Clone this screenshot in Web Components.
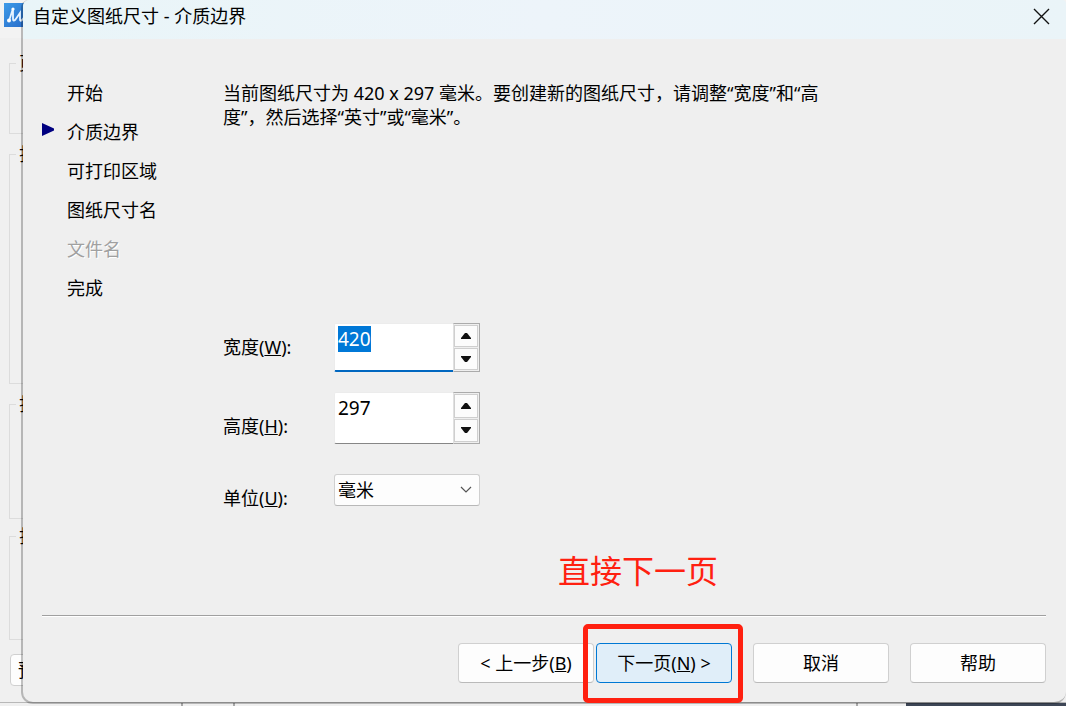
<!DOCTYPE html>
<html lang="zh-CN">
<head>
<meta charset="utf-8">
<title>自定义图纸尺寸 - 介质边界</title>
<style>
  html { height: 100%; }
  body {
    margin: 0;
    min-height: 100%;
    display: grid;
    background: #f0f0f0;
    color: #000;
    font: 18px/24px "Noto Sans", "Noto Sans CJK SC", sans-serif;
  }
</style>
</head>
<body>
<wizard-desktop>
  <plot-window slot="back"></plot-window>
  <wizard-dialog heading="自定义图纸尺寸 - 介质边界">
    <wizard-steps slot="steps">
      <wizard-step>开始</wizard-step>
      <wizard-step current>介质边界</wizard-step>
      <wizard-step>可打印区域</wizard-step>
      <wizard-step>图纸尺寸名</wizard-step>
      <wizard-step disabled>文件名</wizard-step>
      <wizard-step>完成</wizard-step>
    </wizard-steps>
    <media-form>当前图纸尺寸为 420 x 297 毫米。要创建新的图纸尺寸，请调整“宽度”和“高度”，然后选择“英寸”或“毫米”。</media-form>
    <wizard-button slot="actions">&lt; 上一步(<u>B</u>)</wizard-button>
    <red-mark slot="actions" note="直接下一页"><wizard-button primary>下一页(<u>N</u>) &gt;</wizard-button></red-mark>
    <wizard-button slot="actions" spaced>取消</wizard-button>
    <wizard-button slot="actions" spaced>帮助</wizard-button>
  </wizard-dialog>
</wizard-desktop>

<script>
const define = (name, html, setup) => {
  const template = document.createElement('template');
  template.innerHTML = html;
  customElements.define(name, class extends HTMLElement {
    constructor() {
      super();
      this.attachShadow({ mode: 'open' }).append(template.content.cloneNode(true));
    }
    connectedCallback() {
      if (setup) setup(this, this.shadowRoot);
    }
  });
};

/* Stacks the dialog over the window behind it. */
define('wizard-desktop', `
  <style>
    :host { display: grid; grid-template: minmax(0, 1fr) / minmax(0, 1fr); overflow: hidden; }
    ::slotted(*) { grid-area: 1 / 1; }
    ::slotted(wizard-dialog) { margin: 0 0 2px 21px; }
  </style>
  <slot name="back"></slot><slot></slot>`);

define('plot-window', `
  <style>
    :host { display: flex; flex-direction: column; }
    header { height: 38px; background: #f3f3f3; padding: 3px 0 0 4px; box-sizing: border-box; }
    svg { display: block; }
    .groups {
      flex: 1; box-sizing: border-box;
      padding: 13px 0 0 9px; display: flex; flex-direction: column;
    }
    fieldset {
      box-sizing: border-box; width: 200px; margin: 0 0 8px; padding: 0;
      border: 1px solid #dcdcdc; flex: none; min-width: 0;
    }
    legend { margin-left: 6px; padding: 0 3px; line-height: 24px; }
    .page { height: 83px; } .printer { height: 242px; }
    .area { height: 127px; margin-bottom: 5px; } .offset { height: 116px; margin-bottom: 14px; }
    button {
      flex: none; width: 136px; height: 32px; margin: 0 0 0 1px; padding: 0 0 0 7px;
      border: 1px solid #d0d0d0; border-radius: 4px; background: #fdfdfd;
      font: inherit; text-align: left;
    }
    .edge { display: flex; height: 4px; border-top: 1px solid #b8b8b8; background: #f0f0f0; box-sizing: border-box; }
    .edge i:nth-child(1) { width: 17%; border-right: 2px solid #a8a8a8; }
    .edge i:nth-child(2) { width: 50px; border-right: 2px solid #a8a8a8; }
    .edge i:nth-child(3) { flex: 1; border-right: 2px solid #a8a8a8; }
    .edge i:nth-child(4) { width: 48px; }
    .edge i:nth-child(5) { width: 15%; background: #3d4656; }
  </style>
  <header>
    <svg width="24" height="24" viewBox="0 0 24 24" aria-hidden="true">
      <defs><linearGradient id="g" x2="1" y2="1"><stop stop-color="#3f9be8"/><stop offset="1" stop-color="#2569c8"/></linearGradient></defs>
      <rect width="24" height="24" fill="url(#g)"/>
      <path d="M5 18 9 5.500V16q0 3 2.500.500L16 10v6q0 3 2 1l4-5" fill="none" stroke="#e6f3ff" stroke-width="1.800"/>
      <circle cx="9" cy="6" r="1.600" fill="#fff"/><circle cx="5" cy="17.500" r="2" fill="#fff"/>
    </svg>
  </header>
  <div class="groups">
    <fieldset class="page"><legend>页</legend></fieldset>
    <fieldset class="printer"><legend>打</legend></fieldset>
    <fieldset class="area"><legend>打</legend></fieldset>
    <fieldset class="offset"><legend>打</legend></fieldset>
    <button type="button">预</button>
  </div>
  <div class="edge"><i></i><i></i><i></i><i></i><i></i></div>`);

define('wizard-dialog', `
  <style>
    :host {
      display: flex; flex-direction: column; position: relative; background: #efefef padding-box;
      border: solid rgb(0 0 0 / 24%); border-width: 0 0 2px 2px; border-radius: 8px 4px 12px 12px;
    }
    header {
      display: flex; align-items: center; justify-content: space-between; height: 39px;
      box-sizing: border-box; padding: 0 16px 7px 10px;
      background: linear-gradient(90deg, #e9f5f8, #edf4fa 50%, #eaf4f8); border-radius: 6px 4px 0 0;
    }
    h1 { margin: 0; font: inherit; }
    .close { border: 0; padding: 0; background: none; display: block; height: 17px; }
    .close svg { display: block; }
    main { flex: 1; display: grid; grid-template-columns: 181px minmax(0, 1fr); padding-left: 19px; }
    footer { margin: 0 20px 0 19px; padding: 27px 0 19px; border-top: 1px solid #a0a0a0; box-shadow: inset 0 1px #fff; display: flex; justify-content: flex-end; }
  </style>
  <header>
    <h1></h1>
    <button class="close" type="button" aria-label="关闭">
      <svg width="17" height="17" viewBox="0 0 17 17"><path d="M1 1 16 16M16 1 1 16" stroke="#111" stroke-width="1.400"/></svg>
    </button>
  </header>
  <main><slot name="steps"></slot><slot></slot></main>
  <footer><slot name="actions"></slot></footer>`,
  (el, root) => { root.querySelector('h1').textContent = el.getAttribute('heading'); });

define('wizard-steps', `
  <style>:host { display: block; padding-top: 34px; }</style><slot></slot>`);

define('wizard-step', `
  <style>
    :host { display: flex; align-items: center; height: 39px; }
    svg { width: 13px; height: 13px; margin: 0 12px 4px 0; visibility: hidden; }
    :host([current]) svg { visibility: visible; }
    :host([disabled]) { color: #a0a0a0; text-shadow: 1px 1px #fff; }
  </style>
  <svg viewBox="0 0 13 13" aria-hidden="true"><path d="M0 0 12 5.500V7.500L0 13z" fill="#000080"/></svg>
  <span><slot></slot></span>`);

define('media-form', `
  <style>
    :host { display: block; padding-top: 42px; }
    p { margin: 0 0 194px; max-width: 612px; }
    .row { display: grid; grid-template-columns: 111px 146px; align-items: center; }
    .row + .row { margin-top: 21px; }
    .row.unit { margin-top: 27px; }
    .low { padding-top: 16px; }
    select {
      appearance: none; width: 100%; height: 32px; padding: 0 3px; box-sizing: border-box;
      border: 1px solid #d0d0d0; border-bottom-color: #b8b8b8; border-radius: 3px; background: #fdfdfd;
      color: #000; font: inherit; grid-area: 1 / 1;
    }
    .select { display: grid; align-items: center; }
    .select svg { grid-area: 1 / 1; justify-self: end; margin-right: 8px; pointer-events: none; }
  </style>
  <p><slot></slot></p>
  <div class="row"><label for="w">宽度(<u>W</u>):</label><spin-box id="w" label="宽度" value="420" active></spin-box></div>
  <div class="row"><label class="low" for="h">高度(<u>H</u>):</label><spin-box id="h" label="高度" value="297"></spin-box></div>
  <div class="row unit"><label class="low" for="unit">单位(<u>U</u>):</label>
    <div class="select">
      <select id="unit"><option>毫米</option></select>
      <svg width="12" height="8" viewBox="0 0 12 8" aria-hidden="true"><path d="M1 1 6 6 11 1" fill="none" stroke="#555" stroke-width="1.200"/></svg>
    </div>
  </div>`,
  (el, root) => {
    root.querySelectorAll('label').forEach(label => {
      label.addEventListener('click', () => root.getElementById(label.htmlFor).focus());
    });
  });

define('spin-box', `
  <style>
    :host { display: grid; grid-template-columns: minmax(0, 1fr) 27px; height: 51px; }
    :host([active]) { height: 48px; }
    input {
      min-width: 0; width: 100%; height: 100%; box-sizing: border-box; margin: 0; padding: 2px 3px 22px;
      border: 1px solid #ececec; border-width: 1px 0 1px 1px; border-bottom-color: #868686;
      border-radius: 2px 0 0 2px; background: #fff; color: #000; outline: 0; font: inherit; font-size: 19px; line-height: 24px;
    }
    :host([active]) input { border-bottom: 2px solid #0067c0; padding-bottom: 18px; }
    input::selection { background: #0078d7; color: #fff; }
    .spin {
      display: grid; grid-template-rows: 1fr 1fr; gap: 1px; box-sizing: border-box; padding: 1px 1px 1px 0;
      border: 1px solid #ababab; border-left-color: #e0e0e0;
    }
    button { display: grid; place-items: center; border: 1px solid #cfcfcf; background: #fcfcfc; padding: 0; min-height: 0; }
    svg { display: block; }
  </style>
  <input type="text" inputmode="decimal">
  <div class="spin">
    <button type="button" aria-label="增加"><svg width="10" height="6" viewBox="0 0 10 6"><path d="M4 0H6L10 5V6H0V5z" fill="#111"/></svg></button>
    <button type="button" aria-label="减少"><svg width="10" height="6" viewBox="0 0 10 6"><path d="M0 0H10V1L6 6H4L0 1z" fill="#111"/></svg></button>
  </div>`,
  (el, root) => {
    const input = root.querySelector('input');
    input.value = el.getAttribute('value');
    input.setAttribute('aria-label', el.getAttribute('label'));
    el.focus = () => { input.focus(); input.select(); };
    const [up, down] = root.querySelectorAll('button');
    up.onclick = () => { input.value = Number(input.value) + 1; };
    down.onclick = () => { input.value = Number(input.value) - 1; };
    if (el.hasAttribute('active')) el.focus();
  });

define('wizard-button', `
  <style>
    :host { display: block; width: 136px; }
    :host([spaced]) { margin-left: 21px; }
    button {
      width: 100%; height: 40px; padding: 0; border: 1px solid #d0d0d0; border-bottom-color: #bababa;
      border-radius: 4px; background: #fdfdfd; color: #000; font: inherit; display: block;
    }
    :host([primary]) button { border-color: #0078d4; background: #e0eef9; }
  </style>
  <button type="button"><slot></slot></button>`);

/* Hand-drawn style callout: a red frame round its content and a note above it. */
define('red-mark', `
  <style>
    :host { display: block; position: relative; margin-left: 2px; color: #ff2010; }
    .frame { position: absolute; inset: -19px -11px -20px -13px; border: 5px solid; border-radius: 5px; pointer-events: none; }
    .note { position: absolute; right: 14px; bottom: 92px; font-size: 32px; line-height: 40px; white-space: nowrap; }
  </style>
  <slot></slot><div class="frame"></div><div class="note"></div>`,
  (el, root) => { root.querySelector('.note').textContent = el.getAttribute('note'); });
</script>
</body>
</html>
